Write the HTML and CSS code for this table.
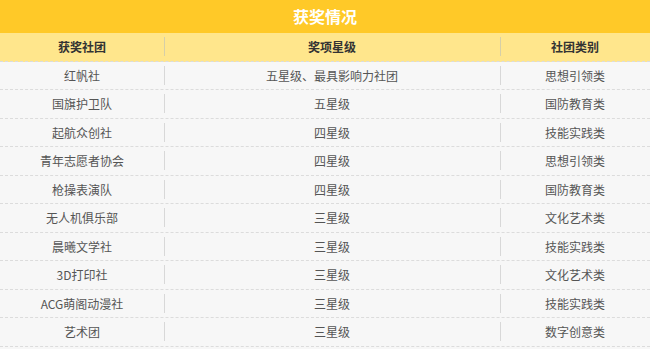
FILE: index.html
```html
<!DOCTYPE html>
<html lang="zh-CN">
<head>
<meta charset="utf-8">
<title>获奖情况</title>
<link rel="stylesheet" href="styles.css">
</head>
<body>
<div class="board">
  <div class="title">获奖情况</div>
  <div class="row head">
    <div class="cell">获奖社团</div>
    <div class="cell sep">奖项星级</div>
    <div class="cell sep">社团类别</div>
  </div>
  <div class="row"><div class="cell">红帆社</div><div class="cell sep">五星级、最具影响力社团</div><div class="cell sep">思想引领类</div></div>
  <div class="row"><div class="cell">国旗护卫队</div><div class="cell sep">五星级</div><div class="cell sep">国防教育类</div></div>
  <div class="row"><div class="cell">起航众创社</div><div class="cell sep">四星级</div><div class="cell sep">技能实践类</div></div>
  <div class="row"><div class="cell">青年志愿者协会</div><div class="cell sep">四星级</div><div class="cell sep">思想引领类</div></div>
  <div class="row"><div class="cell">枪操表演队</div><div class="cell sep">四星级</div><div class="cell sep">国防教育类</div></div>
  <div class="row"><div class="cell">无人机俱乐部</div><div class="cell sep">三星级</div><div class="cell sep">文化艺术类</div></div>
  <div class="row"><div class="cell">晨曦文学社</div><div class="cell sep">三星级</div><div class="cell sep">技能实践类</div></div>
  <div class="row"><div class="cell">3D打印社</div><div class="cell sep">三星级</div><div class="cell sep">文化艺术类</div></div>
  <div class="row"><div class="cell">ACG萌阁动漫社</div><div class="cell sep">三星级</div><div class="cell sep">技能实践类</div></div>
  <div class="row"><div class="cell">艺术团</div><div class="cell sep">三星级</div><div class="cell sep">数字创意类</div></div>
</div>
</body>
</html>
```

FILE: styles.css
```css
html, body {
  margin: 0;
  padding: 0;
  background: #f7f7f7;
}
body {
  font-family: "Noto Sans CJK SC", "Noto Sans", sans-serif;
  font-size: 12px;
  color: #555;
}
.board {
  width: 650px;
  background: #f7f7f7;
}
.title {
  height: 33px;
  line-height: 33px;
  background: #ffc928;
  color: #fff;
  font-size: 16px;
  font-weight: bold;
  text-align: center;
}
.row {
  display: grid;
  grid-template-columns: 164px 336px 150px;
  height: 27.5px;
  border-bottom: 1px dashed #dcdcdc;
}
.row.head {
  background: #ffe68c;
  color: #333;
  font-weight: bold;
}
.cell {
  display: flex;
  align-items: center;
  justify-content: center;
  white-space: nowrap;
}
.cell.sep {
  background: linear-gradient(#d8d8d8, #d8d8d8) left center / 1px 19px no-repeat;
}
.head .cell.sep {
  background-image: linear-gradient(#d6cfa8, #d6cfa8);
}
```
